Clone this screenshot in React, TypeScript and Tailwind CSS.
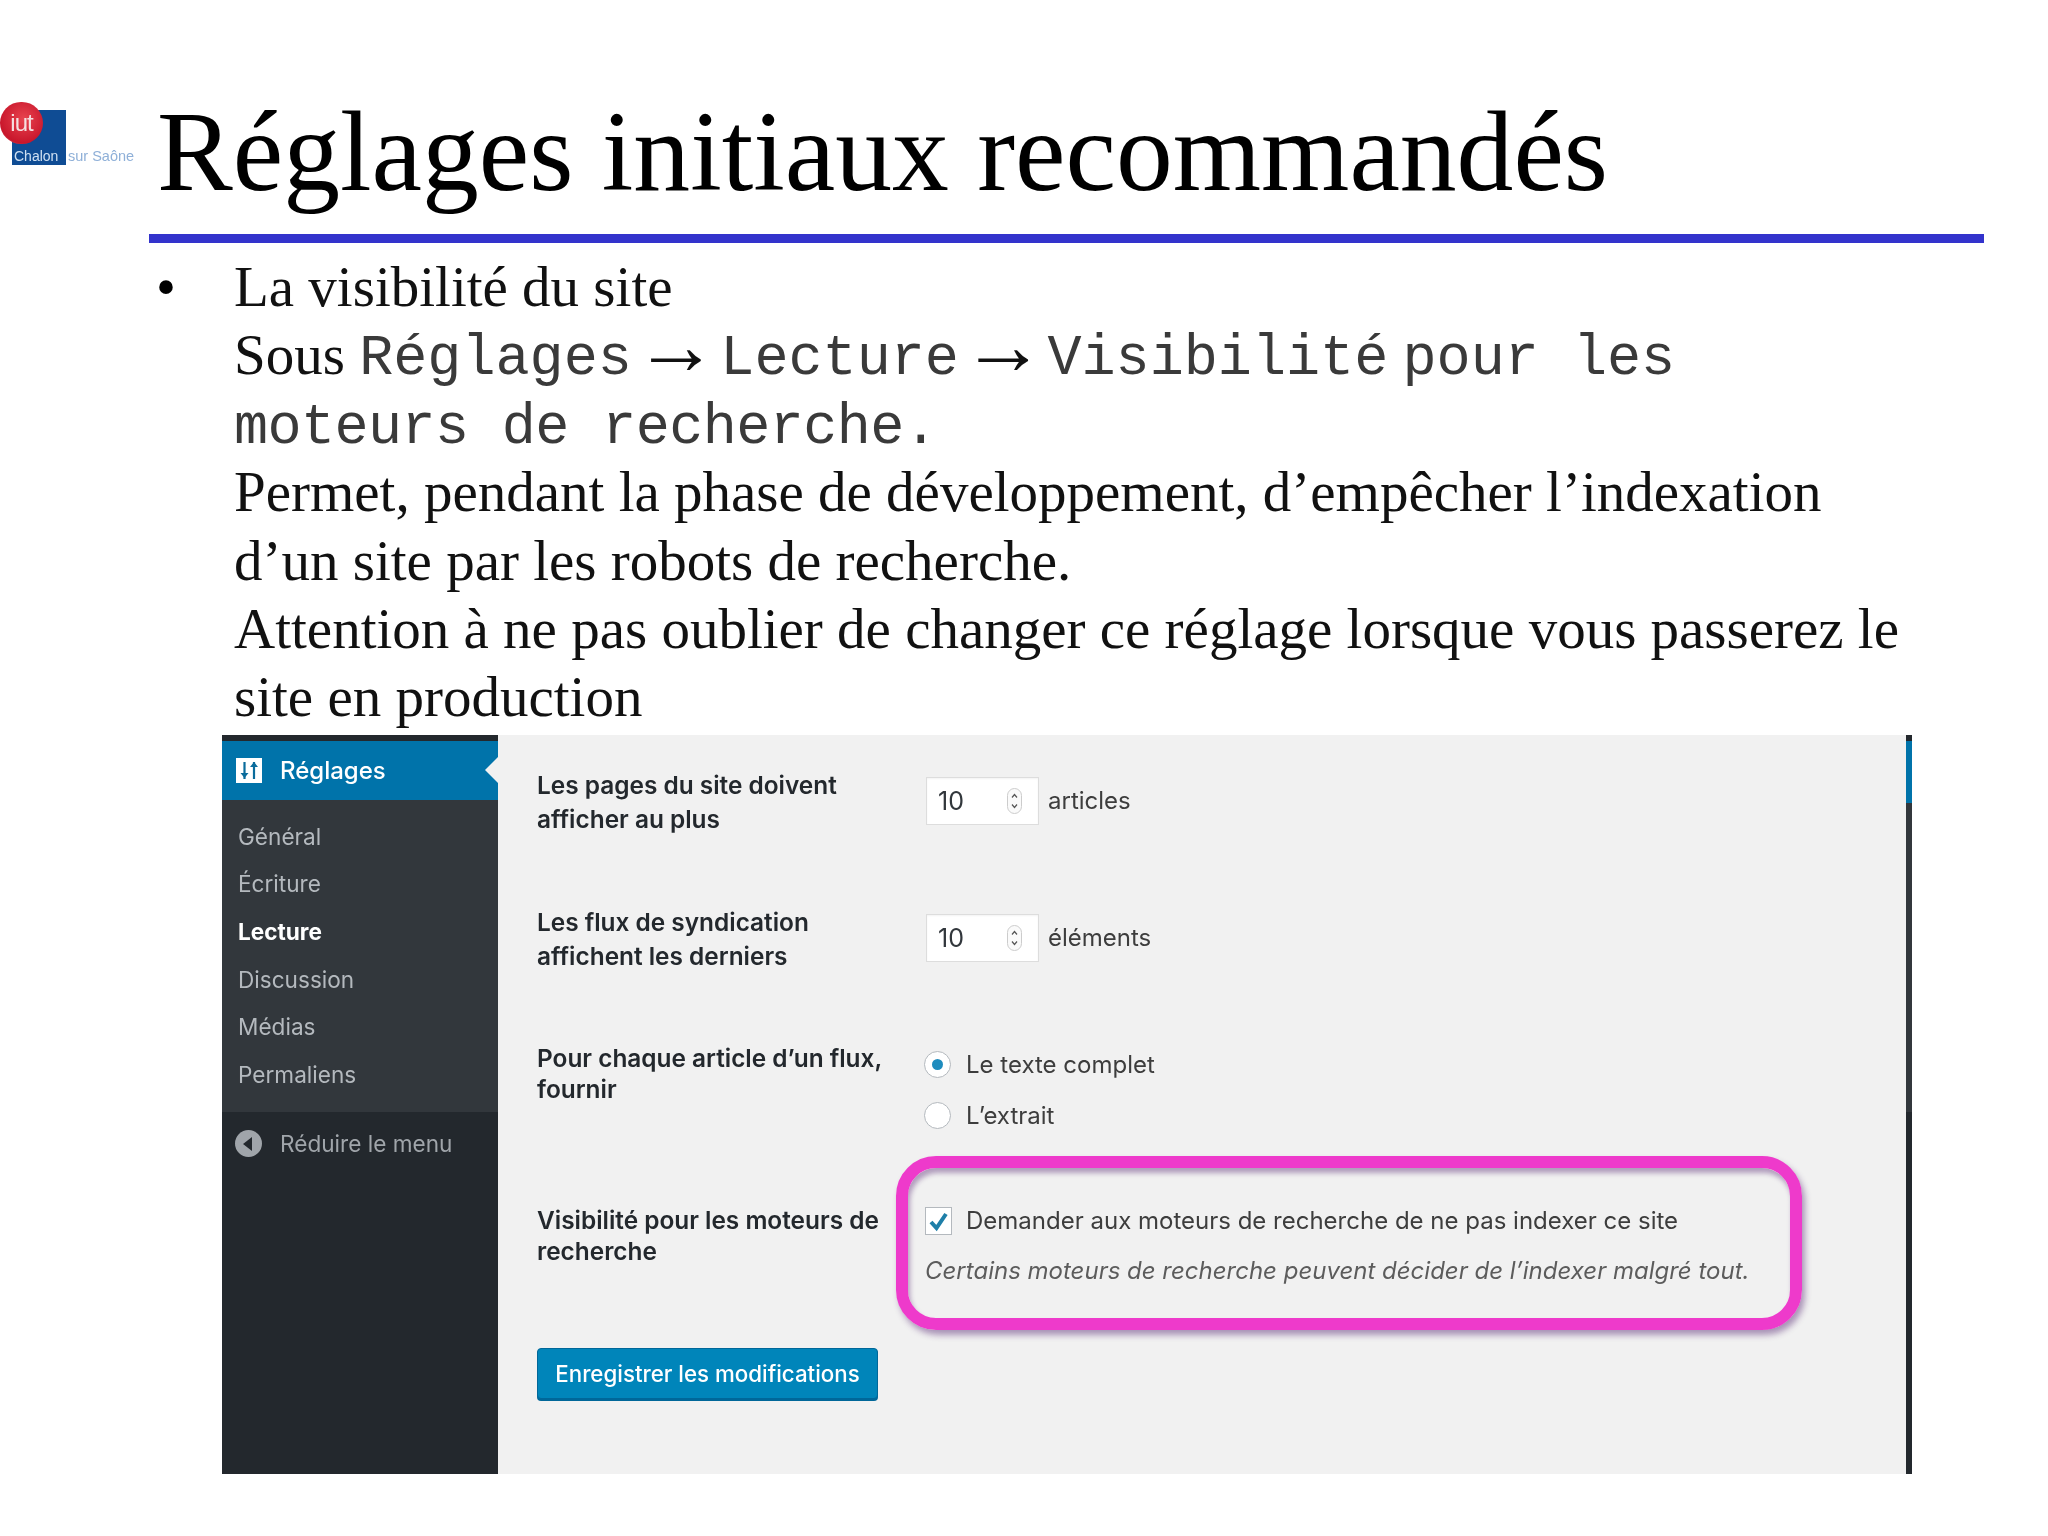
const subItems = ["Général", "Écriture", "Lecture", "Discussion", "Médias", "Permaliens"];

function Logo() {
  return (
    <div className="relative mt-[102px] h-[70px] w-[140px] shrink-0 blur-[0.7px]">
      <div className="absolute left-[12px] top-[8px] h-[55px] w-[54px] bg-[#0f4c94]" />
      <div className="absolute left-0 top-0 flex h-[42px] w-[43px] items-center justify-center rounded-full bg-[radial-gradient(circle_at_55%_40%,#e8434f,#c8162b_70%,#e88)] font-['Liberation_Sans',sans-serif] text-[24px] leading-none tracking-[-1px] text-[#f5dfe0]">
        iut
      </div>
      <div className="absolute left-[14px] top-[47px] font-['Liberation_Sans',sans-serif] text-[14px] leading-[14px] text-[#cfe0f2]">
        Chalon
      </div>
      <div className="absolute left-[68px] top-[47px] whitespace-nowrap font-['Liberation_Sans',sans-serif] text-[14.5px] leading-[14px] text-[#8fb0d8]">
        sur Saône
      </div>
    </div>
  );
}

function Mono({ children }: { children: React.ReactNode }) {
  return <span className="font-['Liberation_Mono',monospace] text-[56.800px] leading-[0] text-[#3a3a3a]">{children}</span>;
}

function Arrow() {
  return <span className="-mx-[12px] text-[84px] leading-[0]">→</span>;
}

function NumberField({ unit }: { unit: string }) {
  return (
    <div className="mt-[9px] flex h-[48px] items-center">
      <div className="flex h-[48px] w-[113px] items-center justify-between border border-[#dddddd] bg-white pl-[11px] pr-[16px] text-[25px] text-[#32373c] shadow-[inset_0_1px_2px_rgba(0,0,0,0.05)]">
        <span>10</span>
        <svg width="15" height="26" viewBox="0 0 15 26" fill="none">
          <rect x="0.5" y="0.5" width="14" height="25" rx="7" fill="#fafafa" stroke="#cccccc" />
          <path d="M5 9.5 7.5 6.5 10 9.5M5 16.5 7.5 19.5 10 16.5" stroke="#555555" strokeWidth="1.2" />
        </svg>
      </div>
      <span className="ml-[9px] text-[#3d3d3d]">{unit}</span>
    </div>
  );
}

function Radio({ label, checked }: { label: string; checked?: boolean }) {
  return (
    <div className="flex h-[51px] items-center">
      <span className="flex h-[27px] w-[27px] items-center justify-center rounded-full border border-[#b4b9be] bg-white">
        {checked && <span className="h-[11px] w-[11px] rounded-full bg-[#1e8cbe]" />}
      </span>
      <span className="ml-[15px] text-[#3d3d3d]">{label}</span>
    </div>
  );
}

function Sidebar() {
  return (
    <aside className="flex w-[276px] shrink-0 flex-col bg-[#23282d] pt-[6px] text-[22.600px]">
      <div className="relative flex h-[59px] items-center bg-[#0073aa] pl-[14px] text-[24px] text-white">
        <svg width="26" height="25" viewBox="0 0 26 25">
          <rect width="26" height="25" fill="#ffffff" />
          <path d="M8.500 4v17M18 4v17" stroke="#0a6c9c" strokeWidth="2.200" />
          <path d="M4.500 15h8L8.500 20zM14 9h8l-4-5z" fill="#0a6c9c" />
        </svg>
        <span className="ml-[18px] font-medium">Réglages</span>
        <span className="absolute right-0 top-[16px] h-0 w-0 border-y-[13px] border-r-[13px] border-y-transparent border-r-[#f1f1f1]" />
      </div>
      <div className="bg-[#32373c] py-[13px] pl-[16px]">
        {subItems.map((item) => (
          <div
            key={item}
            className={item === "Lecture" ? "flex h-[47.6px] items-center font-bold text-white" : "flex h-[47.6px] items-center text-[#b4b9be]"}
          >
            {item}
          </div>
        ))}
      </div>
      <div className="mt-[6px] flex h-[52px] items-center pl-[13px] text-[#a0a5aa]">
        <span className="flex h-[27px] w-[27px] items-center justify-center rounded-full bg-[#a0a5aa]">
          <span className="mr-[3px] h-0 w-0 border-y-[7px] border-r-[9px] border-y-transparent border-r-[#23282d]" />
        </span>
        <span className="ml-[18px]">Réduire le menu</span>
      </div>
    </aside>
  );
}

function Settings() {
  return (
    <div className="flex-1 bg-[#f1f1f1] pl-[39px] pt-[33px]">
      <div className="flex h-[137px]">
        <div className="w-[389px] text-[24.400px] font-semibold leading-[34px] text-[#23282d]">
          Les pages du site doivent
          <br />
          afficher au plus
        </div>
        <NumberField unit="articles" />
      </div>
      <div className="flex h-[137px]">
        <div className="w-[389px] text-[24.400px] font-semibold leading-[34px] text-[#23282d]">
          Les flux de syndication
          <br />
          affichent les derniers
        </div>
        <NumberField unit="éléments" />
      </div>
      <div className="flex h-[114px]">
        <div className="w-[389px] pt-[1px] text-[24.400px] font-semibold leading-[31px] text-[#23282d]">
          Pour chaque article d’un flux,
          <br />
          fournir
        </div>
        <div className="-ml-[2px] -mt-[3px]">
          <Radio label="Le texte complet" checked />
          <Radio label="L’extrait" />
        </div>
      </div>
      <div className="flex">
        <div className="w-[359px] pt-[49px] text-[24.400px] font-semibold leading-[31px] text-[#23282d]">
          Visibilité pour les moteurs de
          <br />
          recherche
        </div>
        <div className="h-[174px] w-[906px] rounded-[40px] border-[12px] border-[#ee3acb] pl-[17px] pt-[39px] shadow-[3px_5px_6px_rgba(80,30,110,0.45),inset_2px_5px_5px_rgba(80,30,110,0.4)]">
          <div className="flex h-[28px] items-center text-[#3d3d3d]">
            <span className="flex h-[28px] w-[27px] items-center justify-center border border-[#b4b9be] bg-white">
              <svg width="23" height="23" viewBox="0 0 23 23" fill="none">
                <path d="M4 12 9.500 18 19 4" stroke="#1e7fa8" strokeWidth="4" />
              </svg>
            </span>
            <span className="ml-[14px]">Demander aux moteurs de recherche de ne pas indexer ce site</span>
          </div>
          <div className="mt-[21px] italic text-[#5c5c5c]">Certains moteurs de recherche peuvent décider de l’indexer malgré tout.</div>
        </div>
      </div>
      <button className="mt-[18px] flex h-[51px] w-[341px] items-center justify-center rounded-[4px] border border-[#006799] bg-[#0085ba] text-[22.300px] font-medium text-white shadow-[0_2px_0_#006799]">
        Enregistrer les modifications
      </button>
    </div>
  );
}

export default function App() {
  return (
    <div className="h-[1536px] w-[2048px] overflow-hidden bg-white font-['Liberation_Serif',serif] text-black">
      <header className="flex h-[234px] items-start">
        <Logo />
        <h1 className="ml-[17px] mt-[96px] whitespace-nowrap text-[113.600px] font-normal leading-none">Réglages initiaux recommandés</h1>
      </header>
      <div className="ml-[149px] h-[9px] w-[1835px] bg-[#3333cc]" />
      <div className="mt-[10px] flex h-[482px] text-[57px] leading-[68.4px]">
        <div className="w-[234px] shrink-0 pl-[156px]">•</div>
        <div className="whitespace-nowrap text-[#111]">
          La visibilité du site
          <br />
          Sous <Mono>Réglages</Mono> <Arrow /> <Mono>Lecture</Mono> <Arrow /> <Mono>Visibilité</Mono> <Mono>pour les</Mono>
          <br />
          <span className="tracking-[-0.6px]">
            <Mono>moteurs de recherche.</Mono>
          </span>
          <br />
          Permet, pendant la phase de développement, d’empêcher l’indexation
          <br />
          d’un site par les robots de recherche.
          <br />
          Attention à ne pas oublier de changer ce réglage lorsque vous passerez le
          <br />
          site en production
        </div>
      </div>
      <section className="ml-[222px] flex h-[739px] w-[1690px] font-['Inter',sans-serif] text-[24px] leading-[30px] blur-[0.5px]">
        <Sidebar />
        <Settings />
        <div className="flex w-[6px] shrink-0 flex-col">
          <div className="h-[6px] bg-[#23282d]" />
          <div className="h-[62px] bg-[#0073aa]" />
          <div className="h-[309px] bg-[#32373c]" />
          <div className="flex-1 bg-[#23282d]" />
        </div>
      </section>
    </div>
  );
}
